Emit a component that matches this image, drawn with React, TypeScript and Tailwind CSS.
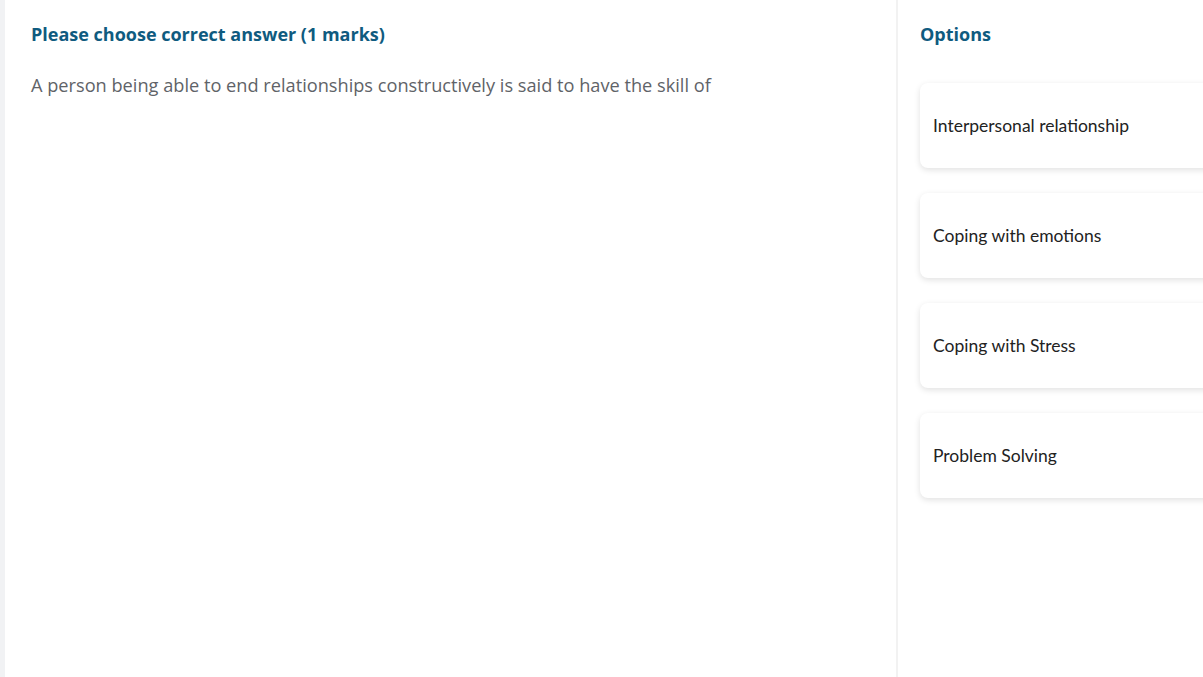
const options = [
  'Interpersonal relationship',
  'Coping with emotions',
  'Coping with Stress',
  'Problem Solving',
]

export default function App() {
  return (
    <div className="flex h-[677px] w-full overflow-hidden bg-[#f1f2f4] pl-[5px]">
      <div className="flex-1 bg-white pl-[26px] pt-[22px] font-['Open_Sans',sans-serif]">
        <h2 className="text-[18px] font-bold leading-6 text-[#0f5b7f]">
          Please choose correct answer (1 marks)
        </h2>
        <p className="mt-[27px] text-[18.2px] leading-6 text-[#5f6368]">
          A person being able to end relationships constructively is said to have the skill of
        </p>
      </div>
      <div className="w-[307px] shrink-0 overflow-hidden border-l-2 border-[#f2f2f2] bg-white pl-[22px] pt-[22px]">
        <h3 className="font-['Open_Sans',sans-serif] text-[18px] font-bold leading-6 text-[#0f5b7f]">
          Options
        </h3>
        <div className="mt-[37px] flex w-[320px] flex-col gap-[25px]">
          {options.map((o) => (
            <div
              key={o}
              className="flex h-[85px] items-center rounded-[8px] bg-white pl-[13px] pt-[2px] font-['Lato',sans-serif] text-[17.5px] text-[#222] shadow-[0_2px_6px_rgba(0,0,0,0.12)]"
            >
              {o}
            </div>
          ))}
        </div>
      </div>
    </div>
  )
}
